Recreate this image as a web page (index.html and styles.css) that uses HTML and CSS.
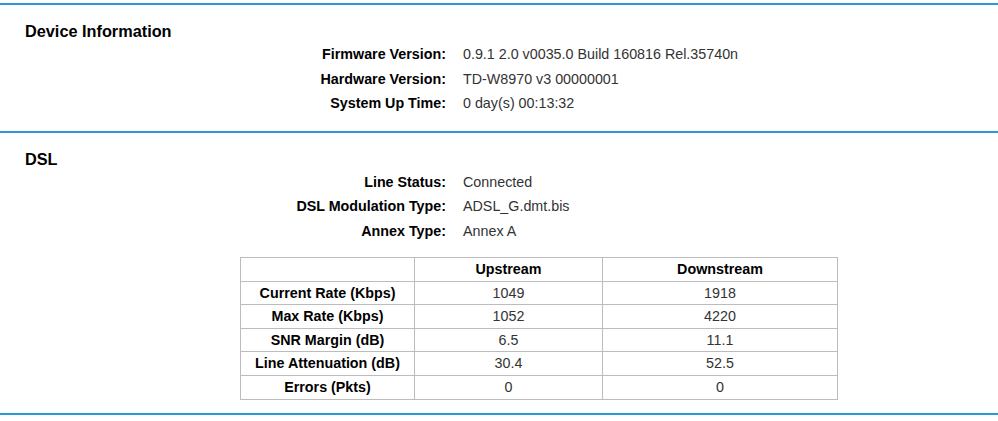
FILE: index.html
```html
<!DOCTYPE html>
<html lang="en">
<head>
    <meta charset="UTF-8">
    <title>Status</title>
    <link rel="stylesheet" href="styles.css">
</head>
<body>
    <div class="top-gap"></div>

    <!-- Device Information -->
    <div class="section">
        <h2>Device Information</h2>
        <div class="info-grid">
            <div class="info-label">Firmware Version:</div>
            <div class="info-value">0.9.1 2.0 v0035.0 Build 160816 Rel.35740n</div>
            <div class="info-label">Hardware Version:</div>
            <div class="info-value">TD-W8970 v3 00000001</div>
            <div class="info-label">System Up Time:</div>
            <div class="info-value">0 day(s) 00:13:32</div>
        </div>
    </div>

    <!-- DSL -->
    <div class="section section-last">
        <h2>DSL</h2>
        <div class="info-grid">
            <div class="info-label">Line Status:</div>
            <div class="info-value">Connected</div>
            <div class="info-label">DSL Modulation Type:</div>
            <div class="info-value">ADSL_G.dmt.bis</div>
            <div class="info-label">Annex Type:</div>
            <div class="info-value">Annex A</div>
        </div>
        <table class="dsl-table">
            <tr>
                <th class="col-name"></th>
                <th class="col-up">Upstream</th>
                <th class="col-down">Downstream</th>
            </tr>
            <tr><th>Current Rate (Kbps)</th><td>1049</td><td>1918</td></tr>
            <tr><th>Max Rate (Kbps)</th><td>1052</td><td>4220</td></tr>
            <tr><th>SNR Margin (dB)</th><td>6.5</td><td>11.1</td></tr>
            <tr><th>Line Attenuation (dB)</th><td>30.4</td><td>52.5</td></tr>
            <tr><th>Errors (Pkts)</th><td>0</td><td>0</td></tr>
        </table>
    </div>
    <div class="section-end"></div>
</body>
</html>
```

FILE: styles.css
```css
body {
    font-family: "Liberation Sans", Arial, sans-serif;
    font-size: 14.3px;
    color: #000;
    margin: 0;
    background-color: #fff;
}
.top-gap {
    height: 3px;
}
.section {
    border-top: 2px solid #2a9ad5;
    padding: 16px 0 15px 0;
}
.section-last {
    padding-bottom: 13px;
}
.section-end {
    border-top: 2px solid #2a9ad5;
}
h2 {
    font-size: 16.3px;
    line-height: 20px;
    font-weight: bold;
    margin: 0 0 1px 25px;
}
.info-grid {
    display: grid;
    grid-template-columns: 446px 1fr;
    column-gap: 17px;
    line-height: 24.5px;
}
.info-label {
    text-align: right;
    font-weight: bold;
}
.info-value {
    color: #333;
}
.dsl-table {
    border-collapse: collapse;
    margin: 14px 0 0 240px;
    width: 598px;
}
.dsl-table th, .dsl-table td {
    border: 1px solid #bcbcbc;
    padding: 0;
    line-height: 22.6px;
    text-align: center;
}
.dsl-table td {
    color: #333;
}
.col-name {
    width: 173px;
}
.col-up {
    width: 187px;
}
```
